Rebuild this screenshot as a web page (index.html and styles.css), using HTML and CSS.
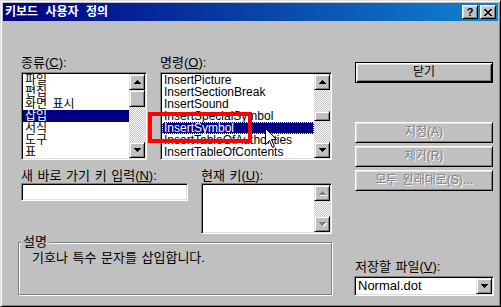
FILE: index.html
```html
<!DOCTYPE html>
<html lang="ko">
<head>
    <meta charset="UTF-8">
    <meta name="viewport" content="width=device-width, initial-scale=1.0">
    <title>키보드 사용자 정의</title>

    <link rel="stylesheet" href="styles.css">
</head>
<body>

    <div class="window">

        <div class="titlebar">
            <span class="title">키보드 사용자 정의</span>
            <div class="title-buttons">
                <button class="tbtn help">?</button>
                <button class="tbtn close">
                    <svg width="8" height="7" viewBox="0 0 8 7"><path d="M0 0h2v1H0zM6 0h2v1H6zM1 1h2v1H1zM5 1h2v1H5zM2 2h4v1H2zM3 3h2v1H3zM2 4h4v1H2zM1 5h2v1H1zM5 5h2v1H5zM0 6h2v1H0zM6 6h2v1H6z"/></svg>
                </button>
            </div>
        </div>

        <div class="dialog">

            <div class="left-col">

                <div class="top-row">
                    <div class="field">
                        <div class="label">종류(<u>C</u>):</div>
                        <div class="listbox cat-list">
                            <ul class="items">
                                <li>파일</li>
                                <li>편집</li>
                                <li>화면 표시</li>
                                <li class="selected">삽입</li>
                                <li>서식</li>
                                <li>도구</li>
                                <li>표</li>
                            </ul>
                            <div class="scrollbar">
                                <div class="sb-btn"><svg class="arrow" width="7" height="4" viewBox="0 0 7 4"><path d="M3 0h1v1H3zM2 1h3v1H2zM1 2h5v1H1zM0 3h7v1H0z"/></svg></div>
                                <div class="sb-thumb cat-thumb"></div>
                                <div class="sb-track"></div>
                                <div class="sb-btn"><svg class="arrow" width="7" height="4" viewBox="0 0 7 4"><path d="M0 0h7v1H0zM1 1h5v1H1zM2 2h3v1H2zM3 3h1v1H3z"/></svg></div>
                            </div>
                        </div>
                    </div>
                    <div class="field cmd-field">
                        <div class="label">명령(<u>O</u>):</div>
                        <div class="listbox cmd-list">
                            <ul class="items">
                                <li>InsertPicture</li>
                                <li>InsertSectionBreak</li>
                                <li>InsertSound</li>
                                <li>InsertSpecialSymbol</li>
                                <li class="selected focused">InsertSymbol</li>
                                <li>InsertTableOfAuthorities</li>
                                <li>InsertTableOfContents</li>
                            </ul>
                            <div class="scrollbar">
                                <div class="sb-btn"><svg class="arrow" width="7" height="4" viewBox="0 0 7 4"><path d="M3 0h1v1H3zM2 1h3v1H2zM1 2h5v1H1zM0 3h7v1H0z"/></svg></div>
                                <div class="sb-track cmd-track-top"></div>
                                <div class="sb-thumb cmd-thumb"></div>
                                <div class="sb-track"></div>
                                <div class="sb-btn"><svg class="arrow" width="7" height="4" viewBox="0 0 7 4"><path d="M0 0h7v1H0zM1 1h5v1H1zM2 2h3v1H2zM3 3h1v1H3z"/></svg></div>
                            </div>
                        </div>
                    </div>
                </div>

                <div class="mid-row">
                    <div class="field key-field">
                        <div class="label">새 바로 가기 키 입력(<u>N</u>):</div>
                        <div class="input"></div>
                    </div>
                    <div class="field current-field">
                        <div class="label">현재 키(<u>U</u>):</div>
                        <div class="listbox current-list">
                            <ul class="items"></ul>
                            <div class="scrollbar">
                                <div class="sb-btn"><svg class="arrow off" width="7" height="4" viewBox="0 0 7 4"><path d="M3 0h1v1H3zM2 1h3v1H2zM1 2h5v1H1zM0 3h7v1H0z"/></svg></div>
                                <div class="sb-track"></div>
                                <div class="sb-btn"><svg class="arrow off" width="7" height="4" viewBox="0 0 7 4"><path d="M0 0h7v1H0zM1 1h5v1H1zM2 2h3v1H2zM3 3h1v1H3z"/></svg></div>
                            </div>
                        </div>
                    </div>
                </div>

                <div class="groupbox">
                    <div class="group-label">설명</div>
                    <div class="desc">기호나 특수 문자를 삽입합니다.</div>
                </div>

            </div>

            <div class="right-col">
                <button class="btn default">닫기</button>
                <button class="btn assign" disabled>지정(A)</button>
                <button class="btn" disabled>제거(R)</button>
                <button class="btn" disabled>모두 원래대로(S)...</button>

                <div class="label save-label">저장할 파일(<u>V</u>):</div>
                <div class="combo">
                    <span class="combo-text">Normal.dot</span>
                    <div class="sb-btn"><svg class="arrow" width="7" height="4" viewBox="0 0 7 4"><path d="M0 0h7v1H0zM1 1h5v1H1zM2 2h3v1H2zM3 3h1v1H3z"/></svg></div>
                </div>
            </div>

        </div>

        <!-- annotation and mouse pointer on top of the dialog -->
        <div class="red-mark"></div>
        <svg class="cursor" width="13" height="21" viewBox="0 0 13 21">
            <path d="M0.5 0.5V16.5L4.5 12.5L7.5 19.5L9.5 18.5L6.5 11.5H11.5Z" fill="#fff" stroke="#000"/>
        </svg>

    </div>

</body>
</html>
```

FILE: styles.css
```css
* {
    margin: 0px;
    padding: 0px;
    box-sizing: border-box;
}
html, body {
    width: 100%;
    height: 100%;
}
body {
    font-family: "Liberation Sans", "Noto Sans CJK KR", sans-serif;
    font-size: 12px;
    word-spacing: 2px;
    color: #000;
    background-color: #c0c0c0;
}
ul {
    list-style-type: none;
}
button {
    font-family: inherit;
    font-size: 12px;
    word-spacing: 2px;
    color: #000;
    background-color: #c0c0c0;
}
.window {
    position: relative;
    width: 501px;
    height: 307px;
    background-color: #c0c0c0;
    border: 1px solid;
    border-color: #dfdfdf #000 #000 #dfdfdf;
    box-shadow: inset 1px 1px #fff, inset -1px -1px #808080;
    padding: 2px;
}
.titlebar {
    height: 18px;
    display: flex;
    align-items: center;
    padding-left: 2px;
    background: linear-gradient(to right, #000080, #1084d0);
}
.title {
    color: #fff;
    font-weight: bold;
    word-spacing: 4px;
    line-height: 18px;
    white-space: nowrap;
}
.title-buttons {
    margin-left: auto;
    margin-right: 2px;
    display: flex;
}
.tbtn {
    width: 16px;
    height: 14px;
    display: flex;
    align-items: center;
    justify-content: center;
    border: 1px solid;
    border-color: #fff #000 #000 #fff;
    box-shadow: inset 1px 1px #dfdfdf, inset -1px -1px #808080;
    font-family: "Liberation Sans", sans-serif;
    font-weight: bold;
    font-size: 11px;
    line-height: 12px;
}
.tbtn.help {
    margin-right: 2px;
}
.dialog {
    display: flex;
    padding-left: 15px;
}
.left-col {
    width: 315px;
}
.label {
    height: 15px;
    font-size: 13px;
    word-spacing: 1px;
    line-height: 15px;
    white-space: nowrap;
}
.top-row {
    display: flex;
    margin-top: 34px;
    padding-left: 3px;
}
.top-row .label {
    margin-bottom: 2px;
}
.cmd-field {
    margin-left: 13px;
}
.listbox {
    display: flex;
    background-color: #fff;
    border: 1px solid;
    border-color: #808080 #fff #fff #808080;
    box-shadow: inset 1px 1px #000, inset -1px -1px #dfdfdf;
    padding: 1px;
}
.cat-list {
    width: 126px;
    height: 88px;
}
.cmd-list {
    width: 172px;
    height: 88px;
}
.items {
    flex: 1;
    overflow: hidden;
}
.items li {
    height: 12px;
    line-height: 12px;
    padding-left: 2px;
    white-space: nowrap;
}
.items li.selected {
    background-color: #000080;
    color: #fff;
}
.items li.focused {
    outline: 1px dotted #ffff80;
    outline-offset: -1px;
}
.scrollbar {
    width: 16px;
    display: flex;
    flex-direction: column;
    background: repeating-conic-gradient(#fff 0 25%, #c0c0c0 0 50%) 0 0 / 2px 2px;
}
.sb-btn {
    width: 16px;
    height: 16px;
    flex-shrink: 0;
    display: flex;
    align-items: center;
    justify-content: center;
    background-color: #c0c0c0;
    border: 1px solid;
    border-color: #dfdfdf #000 #000 #dfdfdf;
    box-shadow: inset 1px 1px #fff, inset -1px -1px #808080;
}
.sb-thumb {
    flex-shrink: 0;
    background-color: #c0c0c0;
    border: 1px solid;
    border-color: #dfdfdf #000 #000 #dfdfdf;
    box-shadow: inset 1px 1px #fff, inset -1px -1px #808080;
}
.cat-thumb {
    height: 17px;
}
.cmd-track-top {
    height: 32px;
    flex: none;
}
.cmd-thumb {
    height: 10px;
}
.sb-track {
    flex: 1;
}
.arrow {
    fill: #000;
}
.arrow.off {
    fill: #808080;
    filter: drop-shadow(1px 1px 0 #fff);
}
.mid-row {
    display: flex;
    margin-top: 8px;
    padding-left: 3px;
}
.current-field {
    margin-left: 13px;
}
.input {
    width: 167px;
    height: 18px;
    background-color: #fff;
    border: 1px solid;
    border-color: #808080 #fff #fff #808080;
    box-shadow: inset 1px 1px #000, inset -1px -1px #dfdfdf;
}
.current-list {
    width: 131px;
    height: 51px;
}
.groupbox {
    margin-top: 8px;
    width: 314px;
    height: 53px;
    border: 1px solid #808080;
    box-shadow: inset 1px 1px #fff, 1px 1px #fff;
}
.group-label {
    width: max-content;
    margin: -8px 0 0 2px;
    padding: 0 2px;
    font-size: 13px;
    line-height: 14px;
    background-color: #c0c0c0;
}
.desc {
    margin: 1px 0 0 13px;
    font-size: 13px;
    word-spacing: 1px;
    line-height: 15px;
}
.right-col {
    margin-left: 21px;
    width: 140px;
    display: flex;
    flex-direction: column;
}
.btn {
    width: 138px;
    height: 21px;
    margin: 3px 0 0 1px;
    border: 1px solid;
    border-color: #fff #000 #000 #fff;
    box-shadow: inset 1px 1px #dfdfdf, inset -1px -1px #808080;
    line-height: 17px;
}
.btn.default {
    margin-top: 41px;
    border-color: #000;
    box-shadow: inset 1px 1px #fff, inset -1px -1px #000, inset 2px 2px #dfdfdf, inset -2px -2px #808080;
}
.btn.assign {
    margin-top: 39px;
}
.btn:disabled {
    color: #808080;
    text-shadow: 1px 1px 0 #fff;
}
.save-label {
    margin-top: 68px;
    padding-left: 1px;
}
.combo {
    margin-top: 2px;
    width: 140px;
    height: 20px;
    display: flex;
    align-items: center;
    padding: 1px;
    background-color: #fff;
    border: 1px solid;
    border-color: #808080 #fff #fff #808080;
    box-shadow: inset 1px 1px #000, inset -1px -1px #dfdfdf;
}
.combo-text {
    flex: 1;
    padding-left: 2px;
    font-size: 13px;
    line-height: 16px;
}
.red-mark {
    position: absolute;
    left: 147px;
    top: 111px;
    width: 104px;
    height: 31px;
    border: 4px solid #ff0000;
}
.cursor {
    position: absolute;
    left: 264px;
    top: 127px;
}
```
